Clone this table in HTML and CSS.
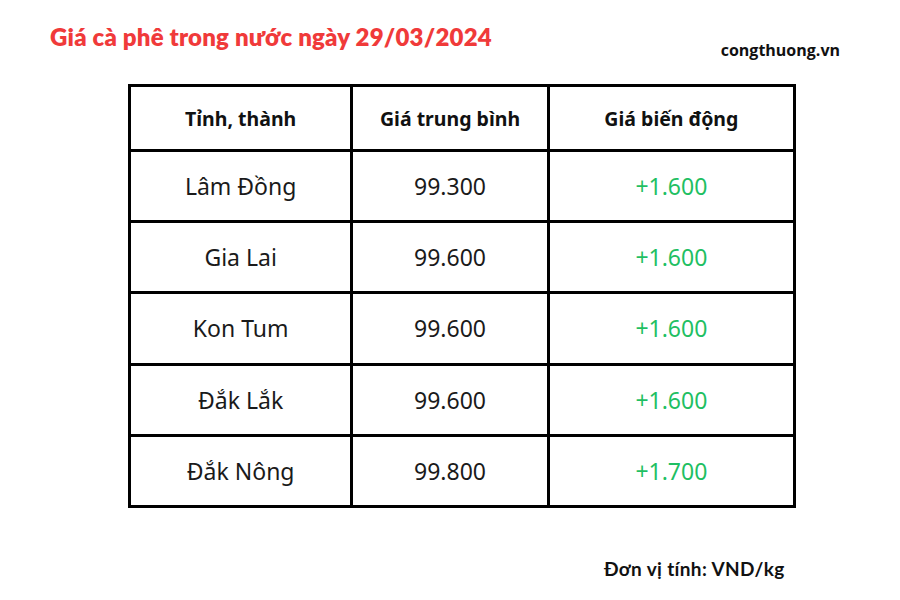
FILE: index.html
```html
<!DOCTYPE html>
<html lang="vi">
<head>
<meta charset="utf-8">
<link rel="stylesheet" href="styles.css">
</head>
<body>
<div class="page">
  <div class="top">
    <h1 class="title">Giá cà phê trong nước ngày 29/03/2024</h1>
    <div class="site">congthuong.vn</div>
  </div>
  <table class="prices">
    <thead>
      <tr><th class="c1">Tỉnh, thành</th><th class="c2">Giá trung bình</th><th class="c3">Giá biến động</th></tr>
    </thead>
    <tbody>
      <tr><td>Lâm Đồng</td><td>99.300</td><td class="up">+1.600</td></tr>
      <tr><td>Gia Lai</td><td>99.600</td><td class="up">+1.600</td></tr>
      <tr><td>Kon Tum</td><td>99.600</td><td class="up">+1.600</td></tr>
      <tr><td>Đắk Lắk</td><td>99.600</td><td class="up">+1.600</td></tr>
      <tr><td>Đắk Nông</td><td>99.800</td><td class="up">+1.700</td></tr>
    </tbody>
  </table>
  <div class="unit">Đơn vị tính: VND/kg</div>
</div>
</body>
</html>
```
FILE: styles.css
```css
html, body { margin: 0; padding: 0; background: #fff; }
.page { width: 900px; height: 600px; position: relative; box-sizing: border-box; }
.top { display: flex; justify-content: space-between; align-items: flex-start; padding: 22px 60px 0 50px; height: 62px; box-sizing: border-box; }
.title { margin: 0; font-family: "Lato", sans-serif; font-weight: 800; font-size: 24px; color: #f03a3a; letter-spacing: 0.2px; line-height: 30px; }
.site { margin-top: 17px; font-family: "Open Sans", sans-serif; font-weight: 700; font-size: 16px; color: #111; }
.prices { margin: 22px 0 0 128px; border-collapse: collapse; width: 668px; border: 3px solid #000; font-family: "Noto Sans", sans-serif; }
.prices th, .prices td { border: 3px solid #000; text-align: center; padding: 0; }
.prices th { height: 62px; font-weight: 700; font-size: 19.5px; color: #111; }
.prices td { height: 68.2px; font-size: 23px; color: #1a1a1a; }
.c1 { width: 220px; }
.c2 { width: 194px; }
.c3 { width: 244px; }
.prices td.up { color: #1fbf63; }
.unit { position: absolute; left: 604px; top: 557px; font-family: "Lato", sans-serif; font-weight: 700; font-size: 19px; letter-spacing: 0.35px; color: #111; }
```
